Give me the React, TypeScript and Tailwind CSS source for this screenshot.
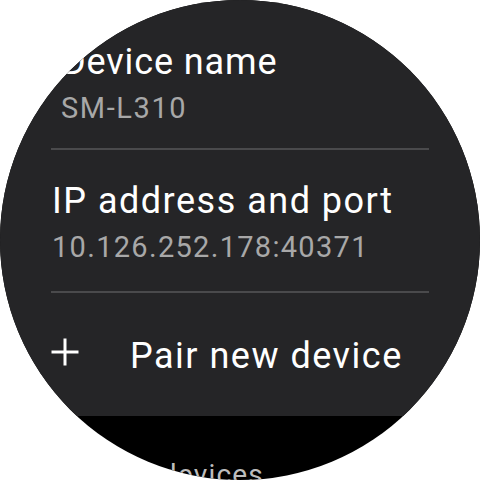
import React from "react";

function PlusIcon() {
  return (
    <svg width="30" height="30" viewBox="0 0 30 30" className="shrink-0">
      <path d="M15 1.5V28.5M1.5 15H28.5" stroke="#ffffff" strokeWidth="3" strokeLinecap="butt" fill="none" />
    </svg>
  );
}

export default function App() {
  return (
    <div className="w-[480px] h-[480px] bg-white font-['Roboto',sans-serif]">
      <div className="w-[480px] h-[480px] rounded-full overflow-hidden bg-black flex flex-col">
        <div className="h-[416px] shrink-0 bg-[#252527] px-[51px] flex flex-col">
          <div className="mt-[40px] pl-[11px] text-[36px] leading-[44px] tracking-[0.9px] text-white">Device name</div>
          <div className="mt-[6px] pl-[10px] text-[29px] leading-[36px] tracking-[1.6px] text-[#a8a8a8]">SM-L310</div>
          <div className="mt-[22px] h-[2px] bg-[#4a4a4c]" />

          <div className="mt-[29px] pl-[1px] text-[36px] leading-[44px] tracking-[1.5px] text-white">IP address and port</div>
          <div className="mt-[6px] pl-[1px] text-[29px] leading-[36px] tracking-[1.3px] text-[#a8a8a8]">10.126.252.178:40371</div>
          <div className="mt-[26px] h-[2px] bg-[#4a4a4c]" />

          <div className="mt-[41px] flex items-start">
            <div className="mt-[3px] -ml-[1px]">
              <PlusIcon />
            </div>
            <div className="ml-[50px] text-[36px] leading-[44px] tracking-[1.5px] text-white">Pair new device</div>
          </div>
        </div>
        <div className="mt-[42px] pl-[66px] text-[28px] leading-[34px] tracking-[1.2px] text-[#bdbdbd]">Paired devices</div>
      </div>
    </div>
  );
}
